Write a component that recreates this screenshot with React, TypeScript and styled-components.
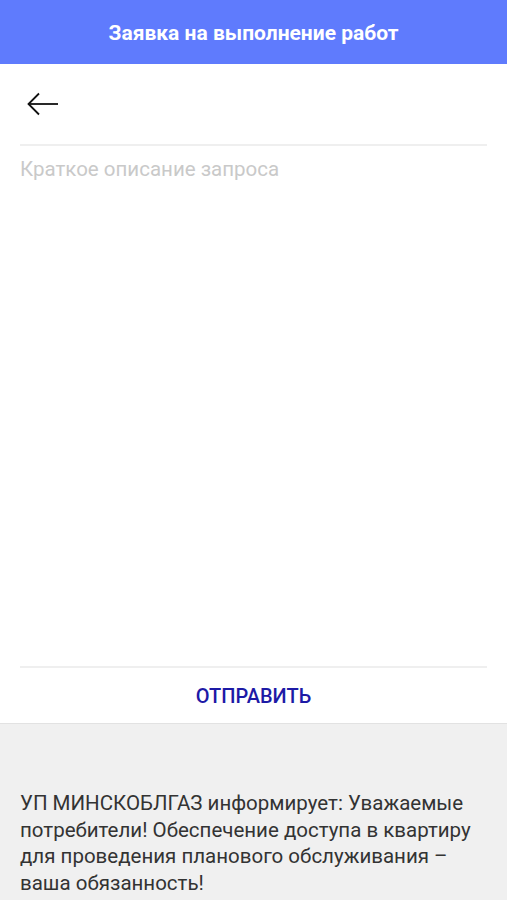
import React from "react";
import styled, { createGlobalStyle } from "styled-components";

const Global = createGlobalStyle`
  html, body { margin: 0; padding: 0; background: #f0f0f0; }
  body { font-family: Roboto, "Noto Sans", sans-serif; }
  * { box-sizing: border-box; }
`;

const Page = styled.div`
  width: 507px;
  height: 900px;
  display: flex;
  flex-direction: column;
  overflow: hidden;
  & > * { flex-shrink: 0; }
`;

const Header = styled.header`
  height: 64px;
  background: #5f7bfd;
  display: flex;
  align-items: center;
  justify-content: center;
  color: #fff;
  font-weight: 700;
  font-size: 21px;
  padding-top: 2px;
`;

const Card = styled.main`
  background: #fff;
  padding: 0 20px;
  display: flex;
  flex-direction: column;
  border-bottom: 1px solid #e2e2e2;
`;

const BackRow = styled.div`
  height: 82px;
  display: flex;
  align-items: center;
  padding-left: 6px;
  border-bottom: 2px solid #efefef;
`;

const BackButton = styled.button`
  background: none;
  border: none;
  padding: 0;
  width: 34px;
  height: 24px;
  display: flex;
  align-items: center;
  cursor: pointer;
`;

const Field = styled.textarea`
  height: 522px;
  border: none;
  border-bottom: 2px solid #efefef;
  resize: none;
  padding: 11px 0 0;
  font-family: Roboto, "Noto Sans", sans-serif;
  font-size: 20.5px;
  line-height: 24px;
  color: #333;
  outline: none;
  &::placeholder { color: #c9c9c9; }
`;

const Submit = styled.button`
  height: 55px;
  border: none;
  background: none;
  font-family: Roboto, "Noto Sans", sans-serif;
  font-size: 20px;
  font-weight: 500;
  color: #1d1aa6;
  cursor: pointer;
`;

const Notice = styled.p`
  margin: 0;
  padding: 66px 20px 0;
  font-size: 20.5px;
  line-height: 26.5px;
  color: #333;
`;

export default function App() {
  return (
    <Page>
      <Global />
      <Header>Заявка на выполнение работ</Header>
      <Card>
        <BackRow>
          <BackButton aria-label="Назад">
            <svg width="34" height="24" viewBox="0 0 34 24" fill="none" stroke="#111" strokeWidth="1.8">
              <path d="M32 12H2.5" />
              <path d="M13 1.5L2.5 12L13 22.5" />
            </svg>
          </BackButton>
        </BackRow>
        <Field placeholder="Краткое описание запроса" />
        <Submit>ОТПРАВИТЬ</Submit>
      </Card>
      <Notice>
        УП МИНСКОБЛГАЗ информирует: Уважаемые потребители! Обеспечение доступа в квартиру для проведения планового обслуживания – ваша обязанность!
      </Notice>
    </Page>
  );
}
